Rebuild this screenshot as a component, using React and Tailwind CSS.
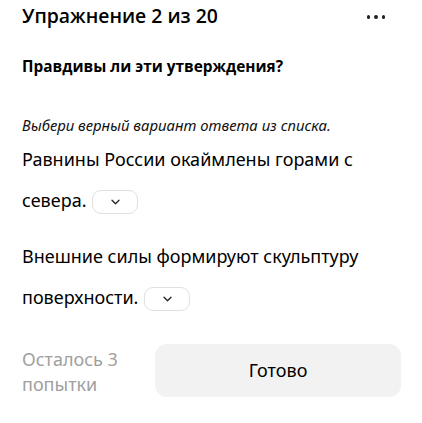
import React, { useState } from "react";

function ChevronDown() {
  return (
    <svg width="9" height="6" viewBox="0 0 9 6" fill="none">
      <path
        d="M1 1.2l3.5 3.5 3.5-3.5"
        stroke="#222"
        strokeWidth="1.3"
        strokeLinecap="round"
        strokeLinejoin="round"
      />
    </svg>
  );
}

function Dropdown() {
  const [open, setOpen] = useState(false);
  return (
    <button
      type="button"
      onClick={() => setOpen(!open)}
      className="ml-[6px] inline-flex h-[24px] w-[46px] items-center justify-center rounded-[9px] border border-[#e0e0e0] bg-white align-middle"
    >
      <ChevronDown />
    </button>
  );
}

export default function App() {
  return (
    <main className="min-h-[423px] w-full bg-white pl-[22px] pr-[21px] text-black [font-family:'Noto_Sans',sans-serif]">
      {/* Header */}
      <div className="flex items-start justify-between pt-[2px]">
        <h1 className="text-[19.4px] font-semibold leading-[28px] [font-family:'Open_Sans',sans-serif]">
          Упражнение 2 из 20
        </h1>
        <div className="mr-[16px] mt-[13px] flex gap-[4px]">
          <span className="h-[3.5px] w-[3.5px] rounded-full bg-[#222]" />
          <span className="h-[3.5px] w-[3.5px] rounded-full bg-[#222]" />
          <span className="h-[3.5px] w-[3.5px] rounded-full bg-[#222]" />
        </div>
      </div>

      <div className="mt-[25px] text-[15.4px] font-bold leading-[24px] [font-family:'Open_Sans',sans-serif]">
        Правдивы ли эти утверждения?
      </div>

      <div className="mt-[34px] text-[14.9px] italic leading-[24px] text-[#111]">
        Выбери верный вариант ответа из списка.
      </div>

      <p className="mt-[2px] text-[18px] leading-[41px]">
        Равнины России окаймлены горами с севера.
        <Dropdown />
      </p>

      <p className="mt-[15px] text-[18px] leading-[41px]">
        Внешние силы формируют скульптуру поверхности.
        <Dropdown />
      </p>

      {/* Footer */}
      <div className="mt-[26px] flex items-start gap-[12px]">
        <div className="w-[121px] pt-[3px] text-[18px] leading-[25px] text-[#a0a0a0]">
          Осталось 3 попытки
        </div>
        <button
          type="button"
          className="flex h-[53px] flex-1 items-center justify-center rounded-[12px] bg-[#f2f2f2] text-[18px] text-black"
        >
          Готово
        </button>
      </div>
    </main>
  );
}
